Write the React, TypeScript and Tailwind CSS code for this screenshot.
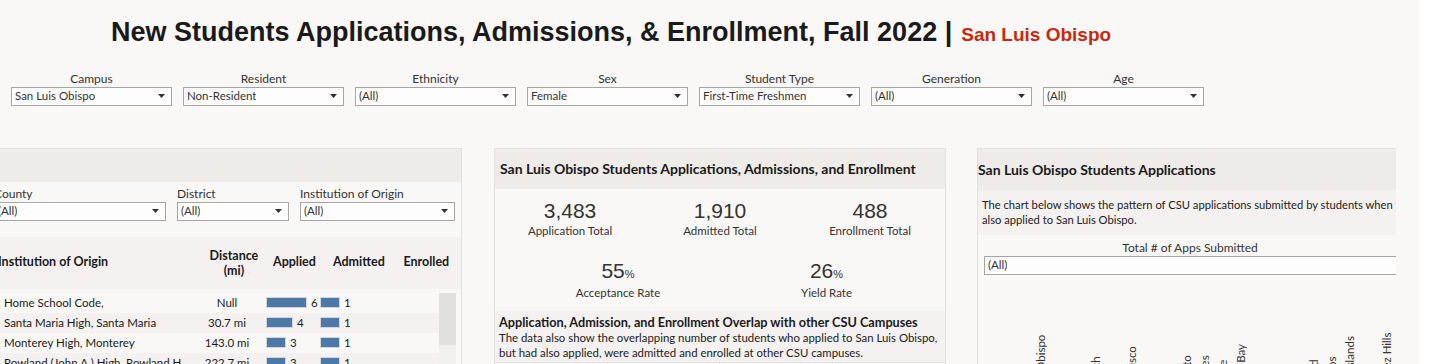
const ui = "font-['Lato','Open_Sans',sans-serif]";
const arial = "font-['Liberation_Sans',Arial,sans-serif]";

const topFilters = [
  { label: "Campus", value: "San Luis Obispo" },
  { label: "Resident", value: "Non-Resident" },
  { label: "Ethnicity", value: "(All)" },
  { label: "Sex", value: "Female" },
  { label: "Student Type", value: "First-Time Freshmen" },
  { label: "Generation", value: "(All)" },
  { label: "Age", value: "(All)" },
];

const rows = [
  { name: "Home School Code,", dist: "Null", applied: 6, appliedW: "w-[41px]", admitted: 1 },
  { name: "Santa Maria High, Santa Maria", dist: "30.7 mi", applied: 4, appliedW: "w-[27px]", admitted: 1 },
  { name: "Monterey High, Monterey", dist: "143.0 mi", applied: 3, appliedW: "w-[20px]", admitted: 1 },
  { name: "Rowland (John A.) High, Rowland Heig...", dist: "222.7 mi", applied: 3, appliedW: "w-[20px]", admitted: 1 },
];

const campuses = [
  { name: "San Luis Obispo", top: "mt-[8px]" },
  { name: "Pomona", top: "mt-[33px]" },
  { name: "Chico", top: "mt-[60px]" },
  { name: "Long Beach", top: "mt-[28px]" },
  { name: "Fresno", top: "mt-[60px]" },
  { name: "San Francisco", top: "mt-[20px]" },
  { name: "San Jose", top: "mt-[60px]" },
  { name: "Fullerton", top: "mt-[60px]" },
  { name: "Sacramento", top: "mt-[27px]" },
  { name: "Los Angeles", top: "mt-[27px]" },
  { name: "Northridge", top: "mt-[31px]" },
  { name: "Monterey Bay", top: "mt-[18px]" },
  { name: "Sonoma", top: "mt-[60px]" },
  { name: "Humboldt", top: "mt-[34px]" },
  { name: "Stanislaus", top: "mt-[60px]" },
  { name: "Bakersfield", top: "mt-[33px]" },
  { name: "San Marcos", top: "mt-[30px]" },
  { name: "Channel Islands", top: "mt-[10px]" },
  { name: "East Bay", top: "mt-[60px]" },
  { name: "Dominguez Hills", top: "mt-[6px]" },
];

const Select = ({ value, className }: { value: string; className?: string }) => (
  <div
    className={`flex h-[19px] items-center justify-between border border-[#a6a6a6] bg-[#fdfdfd] pl-[3px] pr-[6px] text-[11.5px] text-[#333] ${className ?? ""}`}
  >
    <span className="truncate">{value}</span>
    <svg width="7" height="4" viewBox="0 0 7 4" className="shrink-0">
      <path d="M0 0h7L3.5 4z" fill="#333" />
    </svg>
  </div>
);

const Bar = ({ w, n }: { w: string; n: number }) => (
  <div className="flex items-center gap-[4px]">
    <div className={`h-[11px] border border-[#cfd6de] bg-[#4e79a7] ${w}`} />
    <span>{n}</span>
  </div>
);

export default function App() {
  return (
    <div className={`h-[364px] w-[1432px] overflow-hidden bg-white ${ui}`}>
      <div className="h-full w-[1420px] bg-[#f9f8f7]">
        <div className="flex items-baseline gap-[9px] pl-[111px] pt-[15px]">
          <h1 className={`${arial} text-[27px] leading-[34px] font-bold text-[#1a1a1a]`}>
            New Students Applications, Admissions, &amp; Enrollment, Fall 2022 |
          </h1>
          <span className={`${arial} text-[19px] font-bold text-[#c8290e]`}>San Luis Obispo</span>
        </div>

        <div className="mt-[21px] flex gap-[11px] pl-[11px]">
          {topFilters.map((f) => (
            <div key={f.label} className="w-[161px]">
              <div className="text-center text-[12px] leading-[16px] text-[#333]">{f.label}</div>
              <Select value={f.value} />
            </div>
          ))}
        </div>

        <div className="mt-[42px] flex items-start">
          {/* left panel */}
          <div className="h-[220px] w-[462px] shrink-0 border-t border-r border-[#e2e0de]">
            <div className="h-[33px] bg-[#efebe9]" />
            <div className="flex gap-[11px] pr-[6px] pt-[4px] text-[12px] text-[#333]">
              <div className="-ml-[6px] w-[172px]">
                <div className="leading-[16px]">County</div>
                <Select value="(All)" />
              </div>
              <div className="w-[112px]">
                <div className="leading-[16px]">District</div>
                <Select value="(All)" />
              </div>
              <div className="flex-1">
                <div className="leading-[16px]">Institution of Origin</div>
                <Select value="(All)" />
              </div>
            </div>
            <div className="mt-[16px] flex h-[52px] items-center bg-[#f4f1f0] text-[12.5px] font-bold text-[#1a1a1a]">
              <div className="-ml-[2px] w-[209px]">Institution of Origin</div>
              <div className="w-[58px] text-center leading-[15px]">
                Distance
                <br />
                (mi)
              </div>
              <div className="w-[64px] text-center">Applied</div>
              <div className="w-[66px] text-center">Admitted</div>
              <div className="w-[70px] text-center">Enrolled</div>
            </div>
            <div className="flex pt-[4px] text-[11.5px] text-[#1a1a1a]">
              <div className="w-[439px]">
                {rows.map((r, i) => (
                  <div
                    key={r.name}
                    className={`flex h-[20px] items-center ${i % 2 === 1 ? "bg-[#f4f1f0]" : ""}`}
                  >
                    <div className="w-[192px] truncate pl-[4px]">{r.name}</div>
                    <div className="w-[70px] text-center">{r.dist}</div>
                    <div className="w-[58px] pl-[4px]">
                      <Bar w={r.appliedW} n={r.applied} />
                    </div>
                    <Bar w="w-[20px]" n={r.admitted} />
                  </div>
                ))}
              </div>
              <div className="w-[17px] bg-[#f0f0f0]">
                <div className="h-[52px] bg-[#e0e0e0]" />
              </div>
            </div>
          </div>

          {/* middle panel */}
          <div className="ml-[32px] h-[220px] w-[452px] shrink-0 border-x border-t border-[#e2e0de]">
            <div className="flex h-[40px] items-center bg-[#efebe9] pl-[5px] text-[14px] font-bold text-[#1a1a1a]">
              San Luis Obispo Students Applications, Admissions, and Enrollment
            </div>
            <div className="grid grid-cols-3 pt-[9px] text-[#333]">
              {[
                ["3,483", "Application Total"],
                ["1,910", "Admitted Total"],
                ["488", "Enrollment Total"],
              ].map(([n, l]) => (
                <div key={l} className="flex flex-col items-center">
                  <span className={`${arial} text-[21px] leading-[26px]`}>{n}</span>
                  <span className="text-[11.5px] leading-[14px]">{l}</span>
                </div>
              ))}
            </div>
            <div className="flex pt-[21px] text-[#333]">
              <div className="flex w-[226px] flex-col items-center pl-[20px]">
                <span className={`${arial} text-[21px] leading-[24px]`}>
                  55<span className="text-[11px]">%</span>
                </span>
                <span className="text-[11.5px] leading-[14px]">Acceptance Rate</span>
              </div>
              <div className="flex flex-1 flex-col items-center pr-[13px]">
                <span className={`${arial} text-[21px] leading-[24px]`}>
                  26<span className="text-[11px]">%</span>
                </span>
                <span className="text-[11.5px] leading-[14px]">Yield Rate</span>
              </div>
            </div>
            <div className="mt-[11px] bg-[#f4f1f0] px-[4px] pt-[3px] pb-[2px]">
              <div className="text-[12.7px] leading-[16px] font-bold whitespace-nowrap text-[#1a1a1a]">
                Application, Admission, and Enrollment Overlap with other CSU Campuses
              </div>
              <div className="text-[11.4px] leading-[15px] whitespace-nowrap text-[#222]">
                The data also show the overlapping number of students who applied to San Luis Obispo,
                <br />
                but had also applied, were admitted and enrolled at other CSU campuses.
              </div>
            </div>
            <div className="grid h-[4px] grid-cols-4 border-t border-[#e2e0de]">
              <div className="border-r border-[#e2e0de]" />
              <div className="border-r border-[#e2e0de]" />
              <div className="border-r border-[#e2e0de]" />
              <div />
            </div>
          </div>

          {/* right panel */}
          <div className="ml-[31px] h-[220px] w-[419px] shrink-0 overflow-hidden border-l border-t border-[#e2e0de]">
            <div className="flex h-[41px] items-center bg-[#efebe9] whitespace-nowrap text-[14px] font-bold text-[#1a1a1a]">
              San Luis Obispo Students Applications
            </div>
            <div className="h-[45px] bg-[#f4f1f0] pl-[4px] pt-[7px] text-[11.2px] leading-[15px] whitespace-nowrap text-[#222]">
              The chart below shows the pattern of CSU applications submitted by students when they
              <br />
              also applied to San Luis Obispo.
            </div>
            <div className="pl-[6px] pt-[5px]">
              <div className="w-[412px] text-center text-[12px] leading-[16px] text-[#333]">
                Total # of Apps Submitted
              </div>
              <Select value="(All)" className="w-[430px]" />
            </div>
            <div className="flex gap-[6.2px] pl-[57px] pt-[30px]">
              {campuses.map((c) => (
                <div
                  key={c.name}
                  className={`w-[12px] shrink-0 whitespace-nowrap text-[11.5px] leading-[12px] text-[#333] [writing-mode:vertical-rl] rotate-180 ${c.top}`}
                >
                  {c.name}
                </div>
              ))}
            </div>
          </div>
        </div>
      </div>
    </div>
  );
}
